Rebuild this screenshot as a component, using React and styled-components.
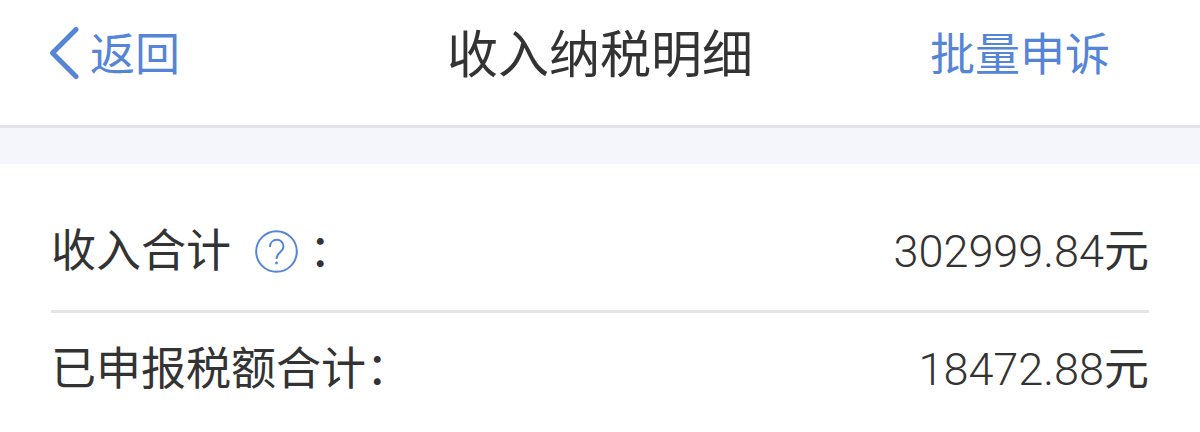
import React from "react";
import styled, { createGlobalStyle } from "styled-components";

const GlobalStyle = createGlobalStyle`
  * {
    box-sizing: border-box;
  }
  body {
    margin: 0;
    background: #fff;
    color: #333;
    font-family: Roboto, "Noto Sans CJK SC", sans-serif;
  }
`;

const Header = styled.header`
  display: grid;
  grid-template-columns: 1fr auto 1fr;
  align-items: center;
  height: 128px;
  padding: 0 48px 14px;
  border-bottom: 3px solid #e2e3e6;
`;

const NavButton = styled.button`
  display: flex;
  align-items: center;
  gap: 10px;
  justify-self: start;
  padding: 0;
  border: 0;
  background: none;
  color: #5585d6;
  font: inherit;
  font-size: 45px;
  line-height: 64px;
  cursor: pointer;
`;

const ActionButton = styled(NavButton)`
  justify-self: end;
  margin-right: 42px;
`;

const Title = styled.h1`
  margin: 0;
  font-size: 51px;
  font-weight: 400;
  line-height: 64px;
`;

const Band = styled.div`
  height: 36px;
  background: #f4f6fb;
`;

const Summary = styled.dl`
  margin: 0;
  padding: 30px 51px 0;
`;

const Row = styled.div`
  display: flex;
  align-items: center;
  justify-content: space-between;
  height: 116px;
  font-size: 45px;
  line-height: 64px;

  & + & {
    border-top: 3px solid #e5e5e7;
  }
`;

const Label = styled.dt`
  display: flex;
  align-items: center;
`;

const Amount = styled.dd`
  margin: 0;
  font-weight: 300;
`;

const Unit = styled.span`
  font-weight: 400;
`;

const HelpButton = styled.button`
  display: flex;
  margin: 0 10px 0 24px;
  padding: 0;
  border: 0;
  background: none;
  color: #5585d6;
  cursor: pointer;
`;

const BackIcon = () => (
  <svg width="32" height="60" viewBox="0 0 32 60" fill="none" aria-hidden="true">
    <path
      d="M28 3.5 L4.5 27 L28 50.5"
      stroke="currentColor"
      strokeWidth="5"
      strokeLinecap="round"
      strokeLinejoin="round"
    />
  </svg>
);

const HelpIcon = () => (
  <svg width="44" height="44" viewBox="0 0 44 44" fill="none" stroke="currentColor" aria-hidden="true">
    <circle cx="21.5" cy="21.5" r="20.3" strokeWidth="2" />
    <path d="M15 17 C15 7.5 28.5 7.5 28.5 16.5 C28.5 22 21.5 22 21.5 29" strokeWidth="2" />
    <circle cx="21.5" cy="33" r="1.4" fill="currentColor" stroke="none" />
  </svg>
);

const rows = [
  { label: "收入合计", amount: "302999.84", help: true },
  { label: "已申报税额合计", amount: "18472.88" }
];

export default function App() {
  return (
    <>
      <GlobalStyle />
      <Header>
        <NavButton>
          <BackIcon />
          返回
        </NavButton>
        <Title>收入纳税明细</Title>
        <ActionButton>批量申诉</ActionButton>
      </Header>
      <Band />
      <Summary>
        {rows.map(({ label, amount, help }) => (
          <Row key={label}>
            <Label>
              {label}
              {help && (
                <HelpButton aria-label="收入合计说明">
                  <HelpIcon />
                </HelpButton>
              )}
              ：
            </Label>
            <Amount>
              {amount}
              <Unit>元</Unit>
            </Amount>
          </Row>
        ))}
      </Summary>
    </>
  );
}
